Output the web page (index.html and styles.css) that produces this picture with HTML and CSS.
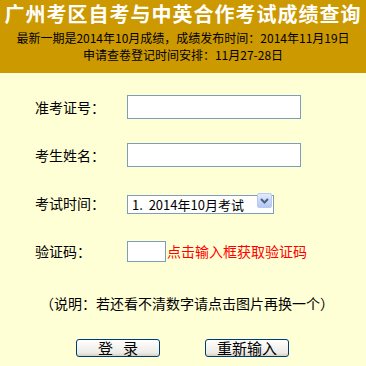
FILE: index.html
```html
<!DOCTYPE html>
<html lang="zh-CN">
<head>
    <meta charset="UTF-8">
    <title>广州考区自考与中英合作考试成绩查询</title>
    <link rel="stylesheet" href="styles.css">
</head>
<body>
    <div class="header">
        <h1 class="title">广州考区自考与中英合作考试成绩查询</h1>
        <p class="notice first">最新一期是2014年10月成绩，成绩发布时间：2014年11月19日</p>
        <p class="notice">申请查卷登记时间安排：11月27-28日</p>
    </div>

    <form class="query-form" onsubmit="return false;">
        <div class="row">
            <label for="zkzh">准考证号：</label>
            <input type="text" id="zkzh" class="text-input">
        </div>
        <div class="row">
            <label for="name">考生姓名：</label>
            <input type="text" id="name" class="text-input">
        </div>
        <div class="row">
            <label for="exam">考试时间：</label>
            <span class="select-wrap">
                <select id="exam" class="exam-select">
                    <option>1.&nbsp; 2014年10月考试</option>
                </select>
                <span class="select-arrow">
                    <svg width="9" height="6" viewBox="0 0 9 6">
                        <path d="M1 1 L4.5 4.5 L8 1" fill="none" stroke="#4d6185" stroke-width="2"/>
                    </svg>
                </span>
            </span>
        </div>
        <div class="row">
            <label for="code">验证码：</label>
            <input type="text" id="code" class="code-input">
            <span class="code-tip">点击输入框获取验证码</span>
        </div>

        <p class="note">（说明：若还看不清数字请点击图片再换一个）</p>

        <div class="buttons">
            <button type="submit" class="btn">登&nbsp;&nbsp;&nbsp;录</button>
            <button type="reset" class="btn">重新输入</button>
        </div>
    </form>
</body>
</html>
```

FILE: styles.css
```css
body {
    margin: 0;
    background-color: #ffffd5;
    font-family: "Noto Sans CJK SC", "DejaVu Sans", sans-serif;
    color: #000;
}

.header {
    background-color: #cc9900;
    height: 73px;
    text-align: center;
    box-sizing: border-box;
}

.title {
    margin: 0;
    color: #fff;
    font-size: 20px;
    font-weight: bold;
    line-height: 28px;
    letter-spacing: 1px;
}

.notice {
    margin: 0;
    font-size: 12px;
    line-height: 17px;
}

.notice.first {
    margin-top: 1px;
}

.query-form {
    padding-top: 10px;
}

.row {
    height: 48px;
    display: flex;
    align-items: center;
    padding-left: 35px;
}

.row label {
    width: 92px;
    font-size: 14px;
}

.text-input {
    width: 174px;
    height: 24px;
    box-sizing: border-box;
    border: 1px solid #7f9db9;
    background: #fff;
    margin: 0;
    padding: 0 3px;
}

.select-wrap {
    position: relative;
    display: inline-block;
}

.exam-select {
    appearance: none;
    -webkit-appearance: none;
    width: 147px;
    height: 19px;
    box-sizing: border-box;
    border: 1px solid #7f9db9;
    background: #fff;
    margin: 0;
    padding: 0 0 0 4px;
    font-family: "Noto Sans CJK SC", sans-serif;
    font-size: 13px;
    line-height: 17px;
    color: #000;
}

.select-arrow {
    position: absolute;
    right: 2px;
    top: 2px;
    width: 15px;
    height: 15px;
    box-sizing: border-box;
    border: 1px solid #b9c9ef;
    border-radius: 2px;
    background: linear-gradient(#e1ebfd, #b3c8f3);
    display: flex;
    align-items: center;
    justify-content: center;
}

.code-input {
    width: 39px;
    height: 21px;
    box-sizing: border-box;
    border: 1px solid #7f9db9;
    background: #fff;
    margin: 0;
}

.code-tip {
    color: #ff0000;
    font-size: 14px;
    margin-left: 1px;
}

.note {
    margin: 16px 0 0 0;
    padding-left: 40px;
    font-size: 14px;
    line-height: 24px;
}

.buttons {
    display: flex;
    padding-left: 76px;
    gap: 45px;
    margin-top: 24px;
}

.btn {
    width: 84px;
    height: 18px;
    box-sizing: border-box;
    border: 1px solid #003c74;
    border-radius: 3px;
    background: linear-gradient(#ffffff, #ecebe6 80%, #d6d0c5);
    font-family: "Noto Sans CJK SC", sans-serif;
    font-size: 15px;
    line-height: 14px;
    padding: 0;
    color: #000;
}
```
